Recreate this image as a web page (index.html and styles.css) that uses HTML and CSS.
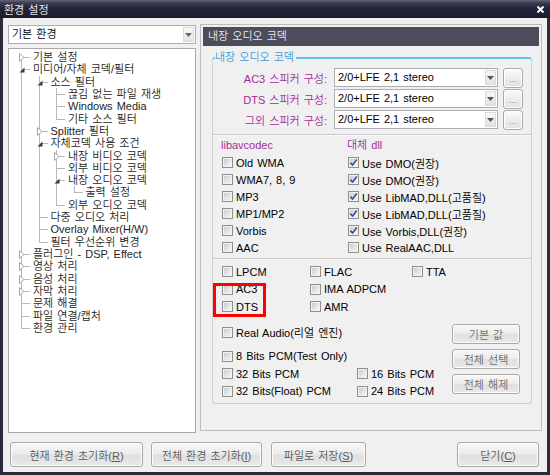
FILE: index.html
```html
<!DOCTYPE html>
<html lang="ko">
<head>
<meta charset="utf-8">
<title>환경 설정</title>
<link rel="stylesheet" href="styles.css">
</head>
<body>
<div class="window">
  <div class="titlebar">
    <span class="title">환경 설정</span>
    <span class="close"><svg width="7" height="7" viewBox="0 0 7 7"><path d="M0.5 0.5L6.5 6.5M6.5 0.5L0.5 6.5" stroke="#fff" stroke-width="2"/></svg></span>
  </div>
  <div class="client">
    <div class="main">
      <div class="leftcol">
        <div class="combo lcombo">
          <span class="ctext">기본 환경</span>
          <span class="cbtn"><svg width="7" height="4" viewBox="0 0 7 4"><path d="M0 0H7L3.5 4Z" fill="#6a6a6a"/></svg></span>
        </div>
        <div class="tree">
          <ul>
            <li><div class="row"><span class="exp c"><svg width="6" height="9" viewBox="0 0 6 9"><path d="M0.5 0.5L5 4.5L0.5 8.5Z" fill="#fff" stroke="#a8a8a8"/></svg></span>기본 설정</div></li>
            <li><div class="row"><span class="exp e"><svg width="6" height="6" viewBox="0 0 6 6"><path d="M5.5 0.5V5.5H0.5Z" fill="#3a3a3a"/></svg></span>미디어/자체 코덱/필터</div>
              <ul>
                <li><div class="row"><span class="exp e"><svg width="6" height="6" viewBox="0 0 6 6"><path d="M5.5 0.5V5.5H0.5Z" fill="#3a3a3a"/></svg></span>소스 필터</div>
                  <ul>
                    <li><div class="row">끊김 없는 파일 재생</div></li>
                    <li><div class="row">Windows Media</div></li>
                    <li><div class="row">기타 소스 필터</div></li>
                  </ul>
                </li>
                <li><div class="row"><span class="exp c"><svg width="6" height="9" viewBox="0 0 6 9"><path d="M0.5 0.5L5 4.5L0.5 8.5Z" fill="#fff" stroke="#a8a8a8"/></svg></span>Splitter 필터</div></li>
                <li><div class="row"><span class="exp e"><svg width="6" height="6" viewBox="0 0 6 6"><path d="M5.5 0.5V5.5H0.5Z" fill="#3a3a3a"/></svg></span>자체코덱 사용 조건</div>
                  <ul>
                    <li><div class="row"><span class="exp c"><svg width="6" height="9" viewBox="0 0 6 9"><path d="M0.5 0.5L5 4.5L0.5 8.5Z" fill="#fff" stroke="#a8a8a8"/></svg></span>내장 비디오 코덱</div></li>
                    <li><div class="row">외부 비디오 코덱</div></li>
                    <li><div class="row"><span class="exp e"><svg width="6" height="6" viewBox="0 0 6 6"><path d="M5.5 0.5V5.5H0.5Z" fill="#3a3a3a"/></svg></span>내장 오디오 코덱</div>
                      <ul>
                        <li><div class="row">출력 설정</div></li>
                      </ul>
                    </li>
                    <li><div class="row">외부 오디오 코덱</div></li>
                  </ul>
                </li>
                <li><div class="row">다중 오디오 처리</div></li>
                <li><div class="row">Overlay Mixer(H/W)</div></li>
                <li><div class="row">필터 우선순위 변경</div></li>
              </ul>
            </li>
            <li><div class="row"><span class="exp c"><svg width="6" height="9" viewBox="0 0 6 9"><path d="M0.5 0.5L5 4.5L0.5 8.5Z" fill="#fff" stroke="#a8a8a8"/></svg></span>플러그인 - DSP, Effect</div></li>
            <li><div class="row"><span class="exp c"><svg width="6" height="9" viewBox="0 0 6 9"><path d="M0.5 0.5L5 4.5L0.5 8.5Z" fill="#fff" stroke="#a8a8a8"/></svg></span>영상 처리</div></li>
            <li><div class="row"><span class="exp c"><svg width="6" height="9" viewBox="0 0 6 9"><path d="M0.5 0.5L5 4.5L0.5 8.5Z" fill="#fff" stroke="#a8a8a8"/></svg></span>음성 처리</div></li>
            <li><div class="row"><span class="exp c"><svg width="6" height="9" viewBox="0 0 6 9"><path d="M0.5 0.5L5 4.5L0.5 8.5Z" fill="#fff" stroke="#a8a8a8"/></svg></span>자막 처리</div></li>
            <li><div class="row">문제 해결</div></li>
            <li><div class="row">파일 연결/캡처</div></li>
            <li><div class="row">환경 관리</div></li>
          </ul>
        </div>
      </div>

      <div class="panel">
        <div class="phead">내장 오디오 코덱</div>
        <fieldset class="group">
          <legend>내장 오디오 코덱</legend>
          <div class="speakers">
            <div class="srow">
              <span class="slabel">AC3 스피커 구성:</span>
              <div class="combo scombo"><span class="ctext">2/0+LFE 2,1 stereo</span><span class="cbtn"><svg width="7" height="4" viewBox="0 0 7 4"><path d="M0 0H7L3.5 4Z" fill="#555"/></svg></span></div>
              <button class="dots">...</button>
            </div>
            <div class="srow">
              <span class="slabel">DTS 스피커 구성:</span>
              <div class="combo scombo"><span class="ctext">2/0+LFE 2,1 stereo</span><span class="cbtn"><svg width="7" height="4" viewBox="0 0 7 4"><path d="M0 0H7L3.5 4Z" fill="#555"/></svg></span></div>
              <button class="dots">...</button>
            </div>
            <div class="srow">
              <span class="slabel">그외 스피커 구성:</span>
              <div class="combo scombo"><span class="ctext">2/0+LFE 2,1 stereo</span><span class="cbtn"><svg width="7" height="4" viewBox="0 0 7 4"><path d="M0 0H7L3.5 4Z" fill="#555"/></svg></span></div>
              <button class="dots">...</button>
            </div>
          </div>

          <div class="codecs">
            <div class="ccol c1">
              <div class="ctitle">libavcodec</div>
              <div class="cb"><span class="box"></span>Old WMA</div>
              <div class="cb"><span class="box"></span>WMA7, 8, 9</div>
              <div class="cb"><span class="box"></span>MP3</div>
              <div class="cb"><span class="box"></span>MP1/MP2</div>
              <div class="cb"><span class="box"></span>Vorbis</div>
              <div class="cb"><span class="box"></span>AAC</div>
            </div>
            <div class="ccol c2">
              <div class="ctitle">대체 dll</div>
              <div class="cb"><span class="box on"><svg width="9" height="9" viewBox="0 0 9 9"><path d="M1.3 4.6L3.6 7L7.8 1.6" fill="none" stroke="#3550a8" stroke-width="1.6"/></svg></span>Use DMO(권장)</div>
              <div class="cb"><span class="box on"><svg width="9" height="9" viewBox="0 0 9 9"><path d="M1.3 4.6L3.6 7L7.8 1.6" fill="none" stroke="#3550a8" stroke-width="1.6"/></svg></span>Use DMO(권장)</div>
              <div class="cb"><span class="box on"><svg width="9" height="9" viewBox="0 0 9 9"><path d="M1.3 4.6L3.6 7L7.8 1.6" fill="none" stroke="#3550a8" stroke-width="1.6"/></svg></span>Use LibMAD,DLL(고품질)</div>
              <div class="cb"><span class="box on"><svg width="9" height="9" viewBox="0 0 9 9"><path d="M1.3 4.6L3.6 7L7.8 1.6" fill="none" stroke="#3550a8" stroke-width="1.6"/></svg></span>Use LibMAD,DLL(고품질)</div>
              <div class="cb"><span class="box on"><svg width="9" height="9" viewBox="0 0 9 9"><path d="M1.3 4.6L3.6 7L7.8 1.6" fill="none" stroke="#3550a8" stroke-width="1.6"/></svg></span>Use Vorbis,DLL(권장)</div>
              <div class="cb"><span class="box"></span>Use RealAAC,DLL</div>
            </div>
          </div>

          <div class="misc">
            <div class="grid3">
              <div class="cb"><span class="box"></span>LPCM</div>
              <div class="cb"><span class="box"></span>FLAC</div>
              <div class="cb"><span class="box"></span>TTA</div>
              <div class="cb"><span class="box"></span>AC3</div>
              <div class="cb"><span class="box"></span>IMA ADPCM</div>
              <div></div>
              <div class="cb"><span class="box"></span>DTS</div>
              <div class="cb"><span class="box"></span>AMR</div>
              <div></div>
            </div>
            <div class="lower">
              <div class="lleft">
                <div class="cb"><span class="box"></span>Real Audio(리얼 엔진)</div>
                <div class="cb pcm8"><span class="box"></span>8 Bits PCM(Test Only)</div>
                <div class="grid2">
                  <div class="cb"><span class="box"></span>32 Bits PCM</div>
                  <div class="cb"><span class="box"></span>16 Bits PCM</div>
                  <div class="cb"><span class="box"></span>32 Bits(Float) PCM</div>
                  <div class="cb"><span class="box"></span>24 Bits PCM</div>
                </div>
              </div>
              <div class="lbtns">
                <button class="btn sbtn">기본 값</button>
                <button class="btn sbtn">전체 선택</button>
                <button class="btn sbtn">전체 해제</button>
              </div>
            </div>
            <div class="redbox"></div>
          </div>
        </fieldset>
      </div>
    </div>

    <div class="bottom">
      <button class="btn bbtn b1">현재 환경 초기화(<u>R</u>)</button>
      <button class="btn bbtn b2">전체 환경 초기화(<u>I</u>)</button>
      <button class="btn bbtn b3">파일로 저장(<u>S</u>)</button>
      <span class="spacer"></span>
      <button class="btn bbtn b4">닫기(<u>C</u>)</button>
    </div>
  </div>
</div>
</body>
</html>
```

FILE: styles.css
```css
* { box-sizing: border-box; }
html, body { margin: 0; padding: 0; }
body {
  width: 550px;
  height: 475px;
  overflow: hidden;
  background: #2a2a3a;
  font-family: "Liberation Sans", "Noto Sans CJK KR DemiLight", "Noto Sans CJK KR", sans-serif;
  font-size: 11px;
  word-spacing: 1px;
  color: #000;
}

.titlebar {
  height: 18px;
  background: linear-gradient(#66667a 0, #3a3a50 3px, #25253a 8px, #1b1b2d 18px);
  display: flex;
  align-items: center;
  justify-content: space-between;
  padding: 0 6px 0 4px;
  color: #e6e6ee;
  font-family: "Noto Sans CJK KR", sans-serif;
  font-size: 11px;
}
.close svg { display: block; }

.client {
  margin: 0 3px 3px;
  height: 454px;
  background: #f0f0f0;
}

.main {
  height: 415px;
  padding: 6px 5px 0;
  display: flex;
  gap: 4px;
}

.leftcol {
  width: 188px;
  display: flex;
  flex-direction: column;
}

.combo {
  display: flex;
  align-items: stretch;
  background: #fff;
  border: 1px solid #abadb3;
  height: 19px;
}
.lcombo { margin-top: 1px; }
.ctext {
  flex: 1;
  padding-left: 3px;
  line-height: 17px;
  white-space: nowrap;
  overflow: hidden;
}
.cbtn {
  width: 11px;
  margin: 1px;
  background: linear-gradient(#f7f7f7, #e3e3e3);
  border: 1px solid #dadada;
  display: flex;
  align-items: center;
  justify-content: center;
}
.cbtn svg { display: block; }

/* tree */
.tree {
  margin-top: 4px;
  height: 385px;
  background: #fff;
  border: 1px solid #a9a9a9;
  padding: 2px 0 0 12px;
  line-height: 12.32px;
}
.tree ul { list-style: none; margin: 0; padding: 0; }
.tree ul ul { margin-left: 5.5px; }
.tree li { position: relative; padding-left: 12px; }
.tree li::before {
  content: "";
  position: absolute;
  left: 0;
  top: 0;
  bottom: 0;
  border-left: 1px solid #b8b8b8;
}
.tree li:last-child::before { bottom: auto; height: 6px; }
.tree > ul > li:first-child::before { top: 6px; }
.row {
  position: relative;
  white-space: nowrap;
  color: #1e1e1e;
}
.row::before {
  content: "";
  position: absolute;
  left: -12px;
  top: 6px;
  width: 9px;
  border-top: 1px solid #b8b8b8;
}
.exp { position: absolute; left: -14px; line-height: 0; }
.exp svg { display: block; }
.exp.c { top: 2px; }
.exp.e { top: 4px; left: -14px; }

/* right panel */
.panel {
  width: 342px;
  height: 407px;
  border: 1px solid #bdbdbd;
  padding: 2px;
}
.phead {
  height: 19px;
  background: #4c4c5d;
  color: #e8e8f0;
  padding-left: 5px;
  line-height: 19px;
  font-size: 11px;
}
.group {
  margin: 5px 7px 0 9px;
  padding: 0;
  border: 1px solid #d0d0d0;
  border-top: 2px solid #5fc3ee;
  border-radius: 3px;
  min-width: 0;
}
.group legend {
  padding: 0 2px 0 0;
  margin-left: 2px;
  color: #3d9bd5;
  line-height: 13px;
}

.speakers {
  padding: 4px 0 5px;
  display: flex;
  flex-direction: column;
  gap: 2px;
}
.srow { display: flex; align-items: center; height: 19px; }
.slabel {
  width: 114px;
  margin-right: 7px;
  text-align: right;
  color: #a32c9c;
  white-space: nowrap;
}
.scombo { width: 164px; }
.dots {
  width: 20px;
  height: 20px;
  margin-left: 5px;
  padding: 0 0 3px;
  border: 1px solid #a9a9a9;
  border-radius: 3px;
  background: linear-gradient(#fcfcfc, #ececec 50%, #e2e2e2);
  box-shadow: inset 0 0 0 1px #fff;
  color: #8c8c8c;
  font-family: "Liberation Sans", sans-serif;
  font-size: 9px;
  line-height: 9px;
  display: flex;
  align-items: flex-end;
  justify-content: center;
}

.codecs {
  border-top: 1px solid #c9c9c9;
  box-shadow: inset 0 1px 0 #fafafa;
  padding: 4px 0 2px 9px;
  display: flex;
}
.c1 { width: 126px; }
.ctitle {
  height: 15px;
  line-height: 13px;
  color: #a32c9c;
  margin-left: -1px;
}

.cb {
  display: flex;
  align-items: center;
  height: 17px;
  white-space: nowrap;
}
.box {
  width: 11px;
  height: 11px;
  flex: none;
  margin-right: 3px;
  border: 1px solid #8e8f8f;
  background: linear-gradient(135deg, #c6c8cc 0%, #e6e6e6 60%, #f8f8f8 100%);
  box-shadow: inset 0 0 0 1px #f2f2f2;
  display: flex;
  align-items: center;
  justify-content: center;
}
.box svg { display: block; }

.misc {
  position: relative;
  border-top: 1px solid #c9c9c9;
  box-shadow: inset 0 1px 0 #fafafa;
  padding: 4px 0 3px;
}
.misc .cb { height: 17.5px; }
.grid3 {
  display: grid;
  grid-template-columns: 88px 102px 1fr;
  padding-left: 9px;
}
.lower {
  margin-top: 8px;
  display: grid;
  grid-template-columns: 1fr 68px;
  padding: 0 11px 0 9px;
}
.pcm8 { margin-top: 6.5px; }
.grid2 {
  display: grid;
  grid-template-columns: 135px 1fr;
}
.lbtns {
  display: flex;
  flex-direction: column;
  gap: 5px;
}

.btn {
  font-family: "Liberation Sans", "Noto Sans CJK KR DemiLight", "Noto Sans CJK KR", sans-serif;
  font-size: 11px;
  word-spacing: 1px;
  color: #6c6c6c;
  border: 1px solid #a9a9a9;
  border-radius: 3px;
  background: linear-gradient(#f8f8f8, #ececec 45%, #e0e0e0 55%, #e9e9e9);
  box-shadow: inset 0 0 0 1px #fbfbfb;
  padding: 0;
  white-space: nowrap;
}
.sbtn { height: 20px; width: 68px; }

.redbox {
  position: absolute;
  left: 0;
  top: 24px;
  width: 53px;
  height: 34px;
  border: 3px solid #ff0000;
}

.bottom {
  display: flex;
  padding: 9px 8px 0 7px;
}
.bbtn { height: 25px; color: #5a5a5a; }
.bbtn u { text-underline-offset: 1px; }
.b1 { width: 133px; margin-right: 8px; }
.b2 { width: 111px; margin-right: 9px; }
.b3 { width: 95px; }
.spacer { flex: 1; }
.b4 { width: 82px; }
```
